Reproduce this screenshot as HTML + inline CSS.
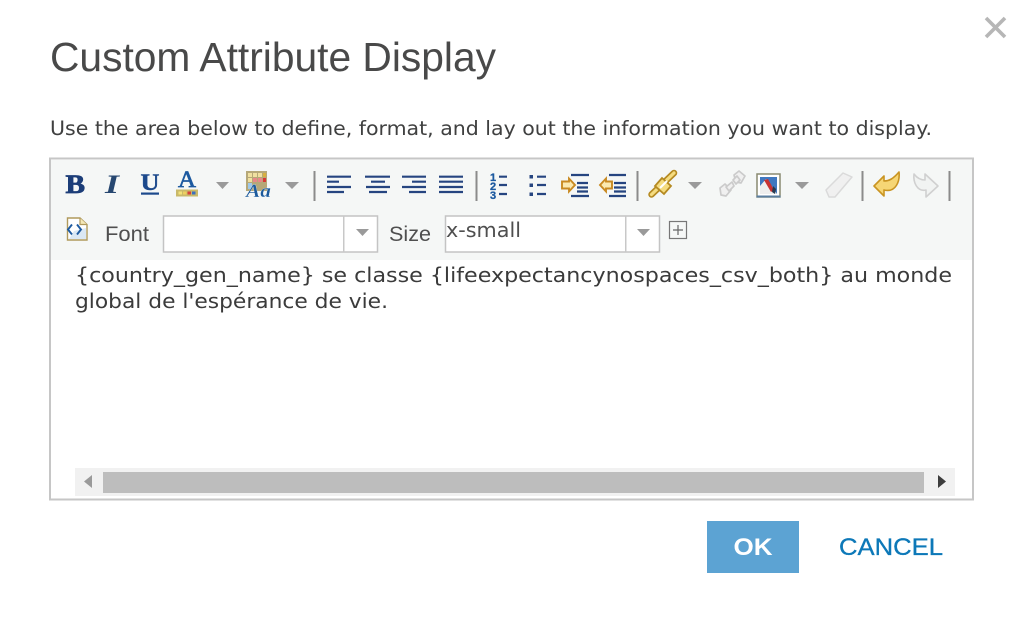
<!DOCTYPE html>
<html><head><meta charset="utf-8"><title>Custom Attribute Display</title>
<style>html,body{margin:0;padding:0;background:#fff;width:1024px;height:624px;overflow:hidden}svg{display:block}.v{font-family:"DejaVu Sans",sans-serif}</style>
</head><body>
<svg width="1024" height="624" viewBox="0 0 1024 624" xmlns="http://www.w3.org/2000/svg" font-family="'Liberation Sans',sans-serif">
<defs><filter id="b" x="0" y="0" width="100%" height="100%"><feGaussianBlur stdDeviation="0.35"/></filter></defs>
<g filter="url(#b)">
<rect width="1024" height="624" fill="#fff"/>
<text x="50" y="71" font-size="40.500" fill="#484a4a" textLength="446" lengthAdjust="spacingAndGlyphs">Custom Attribute Display</text>
<path d="M986 18L1005 37M1005 18L986 37" stroke="#b6b6b6" stroke-width="3.6" fill="none"/>
<text class="v" x="50" y="135" font-size="19.500" fill="#3f4141" textLength="882" lengthAdjust="spacingAndGlyphs">Use the area below to define, format, and lay out the information you want to display.</text>

<rect x="50" y="158.500" width="923" height="341" fill="#fff" stroke="#c6c6c6" stroke-width="2"/>
<rect x="51" y="160" width="921" height="100" fill="#f5f7f6"/>

<!-- B I U A -->
<text x="65.500" y="193" font-family="'Liberation Serif',serif" font-weight="bold" font-size="26" fill="#1c3d78" stroke="#1c3d78" stroke-width=".8" textLength="19.500" lengthAdjust="spacingAndGlyphs">B</text>
<text x="105" y="193" font-family="'Liberation Serif',serif" font-style="italic" font-weight="bold" font-size="26" fill="#27466f" textLength="14" lengthAdjust="spacingAndGlyphs">I</text>
<text x="140.500" y="190" font-family="'Liberation Serif',serif" font-weight="bold" font-size="23" fill="#1f4a8c" stroke="#1f4a8c" stroke-width=".4" textLength="19" lengthAdjust="spacingAndGlyphs">U</text>
<rect x="141" y="192.500" width="18" height="2.200" fill="#1f4a8c"/>
<text x="178" y="187" font-family="'Liberation Serif',serif" font-size="23" fill="#1f5aa0" stroke="#1f5aa0" stroke-width=".7" textLength="18" lengthAdjust="spacingAndGlyphs">A</text>
<rect x="176" y="189.500" width="22" height="7" fill="#c9b96a"/>
<rect x="178.500" y="191.500" width="3.500" height="3" fill="#f2e27a"/><rect x="183" y="191.500" width="3.500" height="3" fill="#eed060"/><rect x="187.500" y="191.500" width="3.500" height="3" fill="#d8403a"/><rect x="192" y="191.500" width="3.500" height="3" fill="#3a70c0"/>
<path d="M216 182H229L222.500 189Z" fill="#9a9a9a"/>
<!-- Aa palette -->
<rect x="246" y="171" width="21" height="20" fill="#b6a878"/>
<g fill="#f0e0a0"><rect x="248" y="173" width="4" height="4"/><rect x="253" y="173" width="4" height="4"/><rect x="258" y="173" width="4" height="4"/><rect x="248" y="178" width="4" height="4"/></g>
<g fill="#e88888"><rect x="253" y="178" width="4" height="4"/><rect x="258" y="178" width="4" height="4"/></g><rect x="263" y="178" width="3" height="4" fill="#d83838"/>
<rect x="263" y="173" width="3" height="4" fill="#d8b040"/>
<rect x="248" y="183" width="4" height="6" fill="#a0c8e8"/>
<text x="246" y="197" font-family="'Liberation Serif',serif" font-style="italic" font-weight="bold" font-size="19" fill="#1a5a9c" stroke="#fff" stroke-width=".2" textLength="25" lengthAdjust="spacingAndGlyphs">Aa</text>
<path d="M285 182H299L292 189Z" fill="#9a9a9a"/>

<g fill="#8b8b8b"><rect x="313.500" y="171" width="2" height="30"/><rect x="475.500" y="171" width="2" height="30"/><rect x="636.500" y="171" width="2" height="30"/><rect x="861.500" y="171" width="2" height="30"/><rect x="948.500" y="171" width="2" height="30"/></g>

<!-- align / lists -->
<g stroke="#264480" stroke-width="2.200" fill="none">
<path d="M327 176.700H351M327 181.700H339M327 187H351M327 192H344"/>
<path d="M365 176.700H390M371 181.700H385M366 187H390M369 192H387"/>
<path d="M402 176.700H426M412 181.700H426M402 187H426M409 192H426"/>
<path d="M439 176.700H463M439 181.700H463M439 187H463M439 192H463"/>
<path d="M499 176.700H507M499 185H507M499 194H507"/>
<path d="M537 176.700H546M537 185H546M537 194H546"/>
<path d="M571 175H589M577 183H588M577 187.500H588M577 191.500H588M571 196H589"/>
<path d="M609 175H626M614 183H626M614 187.500H626M614 191.500H626M609 196H626"/>
</g>
<g font-size="11" font-weight="bold" fill="#1f5aa0" stroke="#1f5aa0" stroke-width=".3"><text x="490" y="181">1</text><text x="490" y="190">2</text><text x="490" y="199">3</text></g>
<g fill="#264480"><rect x="529.500" y="175" width="3.500" height="3.500"/><rect x="529.500" y="183.500" width="3.500" height="3.500"/><rect x="529.500" y="192.500" width="3.500" height="3.500"/></g>
<path d="M562 181.500H569V178.500L575 185L569 191.500V188.500H562Z" fill="#fbe9b0" stroke="#c98a20" stroke-width="1.900"/>
<path d="M612 181.500H606V178.500L600 185L606 191.500V188.500H612Z" fill="#fbe9b0" stroke="#c98a20" stroke-width="1.900"/>

<!-- link -->
<path d="M651.500 194.500L674 173" stroke="#b58a20" stroke-width="6.500" stroke-linecap="round" fill="none"/>
<path d="M651.500 194.500L674 173" stroke="#f5dc80" stroke-width="3.200" stroke-linecap="round" fill="none"/>
<path d="M655 186L662 178L671 186L664 194Z" fill="#f5dc80" stroke="#b58a20" stroke-width="1.800"/>
<path d="M660 188L667 181" stroke="#fff" stroke-width="2"/>
<path d="M688 182H702L695 189Z" fill="#9a9a9a"/>
<!-- unlink -->
<g fill="#f0f0f0" stroke="#cbcbcb" stroke-width="1.700" stroke-linejoin="round">
<path d="M720 188L725 184L731 190L726 196L721 195Z"/>
<path d="M726 187L732 182L734 186L729 191Z"/>
<path d="M734 175L739 171L745 176L741 183L736 182Z"/>
<path d="M733 180L737 176L740 180L736 184Z"/>
</g>
<!-- image -->
<rect x="757" y="174" width="23" height="23" fill="#fff" stroke="#8a8a70" stroke-width="1.500"/>
<rect x="760" y="177" width="17" height="17" fill="#3f78c0"/>
<path d="M760 186L766 179L771 185L775 191L777 194H760Z" fill="#eeeeee"/>
<path d="M764 180L771 192L774 190L768 179Z" fill="#c83030"/>
<path d="M773 186L776 189L775 194L772 192Z" fill="#2a3a50"/>
<rect x="756.500" y="195.500" width="24" height="2" fill="#5a7ea0"/>
<path d="M795 182H809L802 189Z" fill="#9a9a9a"/>
<!-- eraser -->
<path d="M826 190L843 173L852 177L835 197L829 197Z" fill="#f0f0f0" stroke="#dadada" stroke-width="1.500" stroke-linejoin="round"/>
<!-- undo -->
<path d="M874 186L884 176V181C889 181 893 179 899 172C900 181 896 193 884 190V196Z" fill="#f6d675" stroke="#c99420" stroke-width="1.600" stroke-linejoin="round"/>
<!-- redo -->
<path d="M938 186L925 174V180C921 180 917 178 914 174C913 182 917 192 926 190V197Z" fill="#f1f3f2" stroke="#d0d0d0" stroke-width="1.600" stroke-linejoin="round"/>

<!-- source icon -->
<path d="M67.500 218H80L87 224.500V240H67.500Z" fill="#fff" stroke="#b09a5c" stroke-width="1.400"/>
<path d="M80 218V224.500H87" fill="#f4e8b8" stroke="#b09a5c" stroke-width="1.200"/>
<path d="M74 231L86 228V239H69Z" fill="#dbe8f4"/>
<path d="M72 224.500L68 229.500L72 234.500M77 224.500L81 229.500L77 234.500" stroke="#1f5aa0" stroke-width="1.900" fill="none"/>

<text x="105" y="241" font-size="21" fill="#4f4f4f" textLength="44" lengthAdjust="spacingAndGlyphs">Font</text>
<rect x="163.500" y="216" width="214" height="36" fill="#fff" stroke="#c4c4c4" stroke-width="1.500"/>
<rect x="343" y="216" width="1.500" height="36" fill="#c8c8c8"/>
<path d="M356 229H369L362.500 236Z" fill="#9a9a9a"/>
<text x="389" y="241" font-size="21" fill="#4f4f4f" textLength="42" lengthAdjust="spacingAndGlyphs">Size</text>
<rect x="445.500" y="216" width="214" height="36" fill="#fff" stroke="#c4c4c4" stroke-width="1.500"/>
<rect x="625" y="216" width="1.500" height="36" fill="#c8c8c8"/>
<path d="M637 229H650L643.500 236Z" fill="#9a9a9a"/>
<text class="v" x="446" y="237" font-size="20.500" fill="#4f4f4f" textLength="75" lengthAdjust="spacingAndGlyphs">x-small</text>
<rect x="669.500" y="221.500" width="17" height="17" fill="none" stroke="#777" stroke-width="1.200"/>
<path d="M678 225V235M673 230H683" stroke="#666" stroke-width="1.200"/>

<!-- content -->
<text class="v" x="75" y="282" font-size="20.500" fill="#3a3a3a" textLength="877" lengthAdjust="spacingAndGlyphs">{country_gen_name} se classe {lifeexpectancynospaces_csv_both} au monde</text>
<text class="v" x="75" y="308" font-size="20.500" fill="#3a3a3a" textLength="313" lengthAdjust="spacingAndGlyphs">global de l'espérance de vie.</text>

<!-- scrollbar -->
<rect x="75" y="468" width="880" height="28" fill="#f1f1f1"/>
<rect x="103" y="472" width="821" height="21" fill="#bdbdbd"/>
<path d="M92 475V488L84 481.500Z" fill="#9a9a9a"/>
<path d="M938 475V488L946 481.500Z" fill="#3c3c3c"/>

<!-- buttons -->
<rect x="707" y="521" width="92" height="52" fill="#5ba3d3"/>
<text x="733.500" y="555" font-size="24" font-weight="bold" fill="#fff" textLength="39" lengthAdjust="spacingAndGlyphs">OK</text>
<text x="839" y="555" font-size="24" fill="#0a78b8" stroke="#0a78b8" stroke-width=".3" textLength="104" lengthAdjust="spacingAndGlyphs">CANCEL</text>
</g>
</svg>
</body></html>
